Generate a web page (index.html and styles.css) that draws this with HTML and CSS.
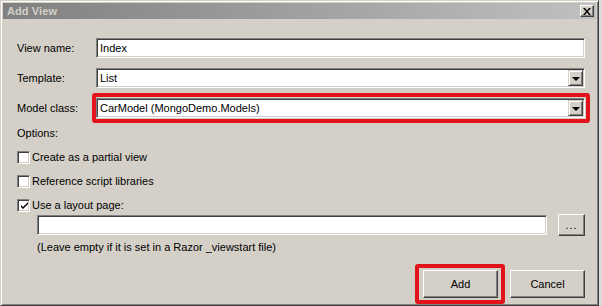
FILE: index.html
```html
<!DOCTYPE html>
<html>
<head>
<meta charset="utf-8">
<link rel="stylesheet" href="styles.css">
</head>
<body>
<div class="window">
  <div class="titlebar">
    <span class="title">Add View</span>
    <span class="close">
      <svg width="8" height="7" viewBox="0 0 8 7"><path d="M0 0h2l2 2.5L6 0h2L5 3.5 8 7H6L4 4.5 2 7H0l3-3.5z" fill="#000"/></svg>
    </span>
  </div>
  <div class="content">
    <div class="field">
      <label class="lbl">View name:</label>
      <div class="input">Index</div>
    </div>
    <div class="field">
      <label class="lbl">Template:</label>
      <div class="input select">List<span class="drop"><span class="tri"></span></span></div>
    </div>
    <div class="field">
      <label class="lbl">Model class:</label>
      <div class="input select hl">CarModel (MongoDemo.Models)<span class="drop"><span class="tri"></span></span></div>
    </div>
    <div class="options">Options:</div>
    <div class="checks">
      <div class="check"><span class="box"></span>Create as a partial view</div>
      <div class="check"><span class="box"></span>Reference script libraries</div>
      <div class="check"><span class="box"><svg width="9" height="9" viewBox="0 0 9 9"><path d="M1 4l2 2 5-5v2L3 8 1 6z" fill="#000"/></svg></span>Use a layout page:</div>
    </div>
    <div class="layout-row">
      <div class="input grow"></div>
      <div class="btn dots">...</div>
    </div>
    <div class="note">(Leave empty if it is set in a Razor _viewstart file)</div>
    <div class="actions">
      <div class="btn big default hl2">Add</div>
      <div class="btn big">Cancel</div>
    </div>
  </div>
</div>
</body>
</html>
```
FILE: styles.css
```css
html, body {
  margin: 0;
  padding: 0;
  background: #dcdcdc;
}
body {
  font-family: "Liberation Sans", Arial, sans-serif;
  font-size: 11px;
  color: #000;
  width: 602px;
  height: 306px;
  overflow: hidden;
}
.window {
  box-sizing: border-box;
  width: 599px;
  height: 306px;
  background: #d4d0c8;
  border: 1px solid;
  border-color: #d4d0c8 #404040 #404040 #d4d0c8;
  box-shadow: inset 1px 1px #fff, inset -1px -1px #808080;
  padding: 2px;
  display: flex;
  flex-direction: column;
}
.titlebar {
  height: 16px;
  background: linear-gradient(to right, #808080, #c0c0c0);
  display: flex;
  align-items: center;
  justify-content: space-between;
  padding: 0 2px 0 4px;
}
.title {
  color: #d4d0c8;
  font-weight: bold;
  font-size: 11px;
  letter-spacing: 0.1px;
}
.close {
  box-sizing: border-box;
  width: 14px;
  height: 12px;
  background: #d4d0c8;
  border: 1px solid;
  border-color: #fff #404040 #404040 #fff;
  box-shadow: inset -1px -1px #808080;
  display: flex;
  align-items: center;
  justify-content: center;
  padding-right: 1px;
}
.content {
  padding: 19px 11px 0 14px;
  display: flex;
  flex-direction: column;
}
.field {
  display: grid;
  grid-template-columns: 79px 1fr;
  align-items: center;
  height: 20px;
  margin-bottom: 10px;
}
.input {
  box-sizing: border-box;
  height: 20px;
  background: #fff;
  border: 1px solid;
  border-color: #808080 #fff #fff #808080;
  box-shadow: inset 1px 1px #404040, inset -1px -1px #d4d0c8;
  padding: 0 3px;
  display: flex;
  align-items: center;
  position: relative;
}
.select .drop {
  position: absolute;
  right: 1px;
  top: 1px;
  bottom: 1px;
  width: 15px;
  box-sizing: border-box;
  background: #d4d0c8;
  border: 1px solid;
  border-color: #d4d0c8 #404040 #404040 #d4d0c8;
  box-shadow: inset 1px 1px #fff, inset -1px -1px #808080;
  display: flex;
  align-items: center;
  justify-content: center;
}
.tri {
  width: 0;
  height: 0;
  border-left: 4px solid transparent;
  border-right: 4px solid transparent;
  border-top: 4px solid #000;
  margin-top: 1px;
}
.hl::after {
  content: "";
  position: absolute;
  top: -6px;
  bottom: -6px;
  left: -5px;
  right: -6px;
  border: 4px solid #e2131a;
  border-radius: 3px;
}
.options {
  height: 13px;
  line-height: 13px;
  margin-top: -1px;
}
.checks {
  margin-top: 5px;
  display: flex;
  flex-direction: column;
}
.check {
  height: 24px;
  display: flex;
  align-items: center;
}
.box {
  box-sizing: border-box;
  width: 13px;
  height: 13px;
  background: #fff;
  border: 1px solid;
  border-color: #808080 #fff #fff #808080;
  box-shadow: inset 1px 1px #404040, inset -1px -1px #d4d0c8;
  margin-right: 2px;
  display: flex;
  align-items: center;
  justify-content: center;
}
.box svg {
  margin-left: 1px;
}
.layout-row {
  display: flex;
  align-items: center;
  gap: 11px;
  margin-left: 20px;
  margin-top: -3px;
  height: 22px;
}
.grow {
  flex: 1;
}
.btn {
  box-sizing: border-box;
  background: #d4d0c8;
  border: 1px solid;
  border-color: #fff #404040 #404040 #fff;
  box-shadow: inset -1px -1px #808080;
  display: flex;
  align-items: center;
  justify-content: center;
  position: relative;
}
.dots {
  width: 27px;
  height: 22px;
  letter-spacing: 1px;
}
.note {
  margin: 5px 0 0 20px;
  height: 13px;
  line-height: 13px;
}
.actions {
  display: flex;
  justify-content: flex-end;
  gap: 12px;
  margin-top: 16px;
}
.big {
  width: 75px;
  height: 28px;
}
.hl2::after {
  content: "";
  position: absolute;
  top: -7px;
  bottom: -7px;
  left: -9px;
  right: -8px;
  border: 4px solid #e2131a;
  border-radius: 3px;
}
```
